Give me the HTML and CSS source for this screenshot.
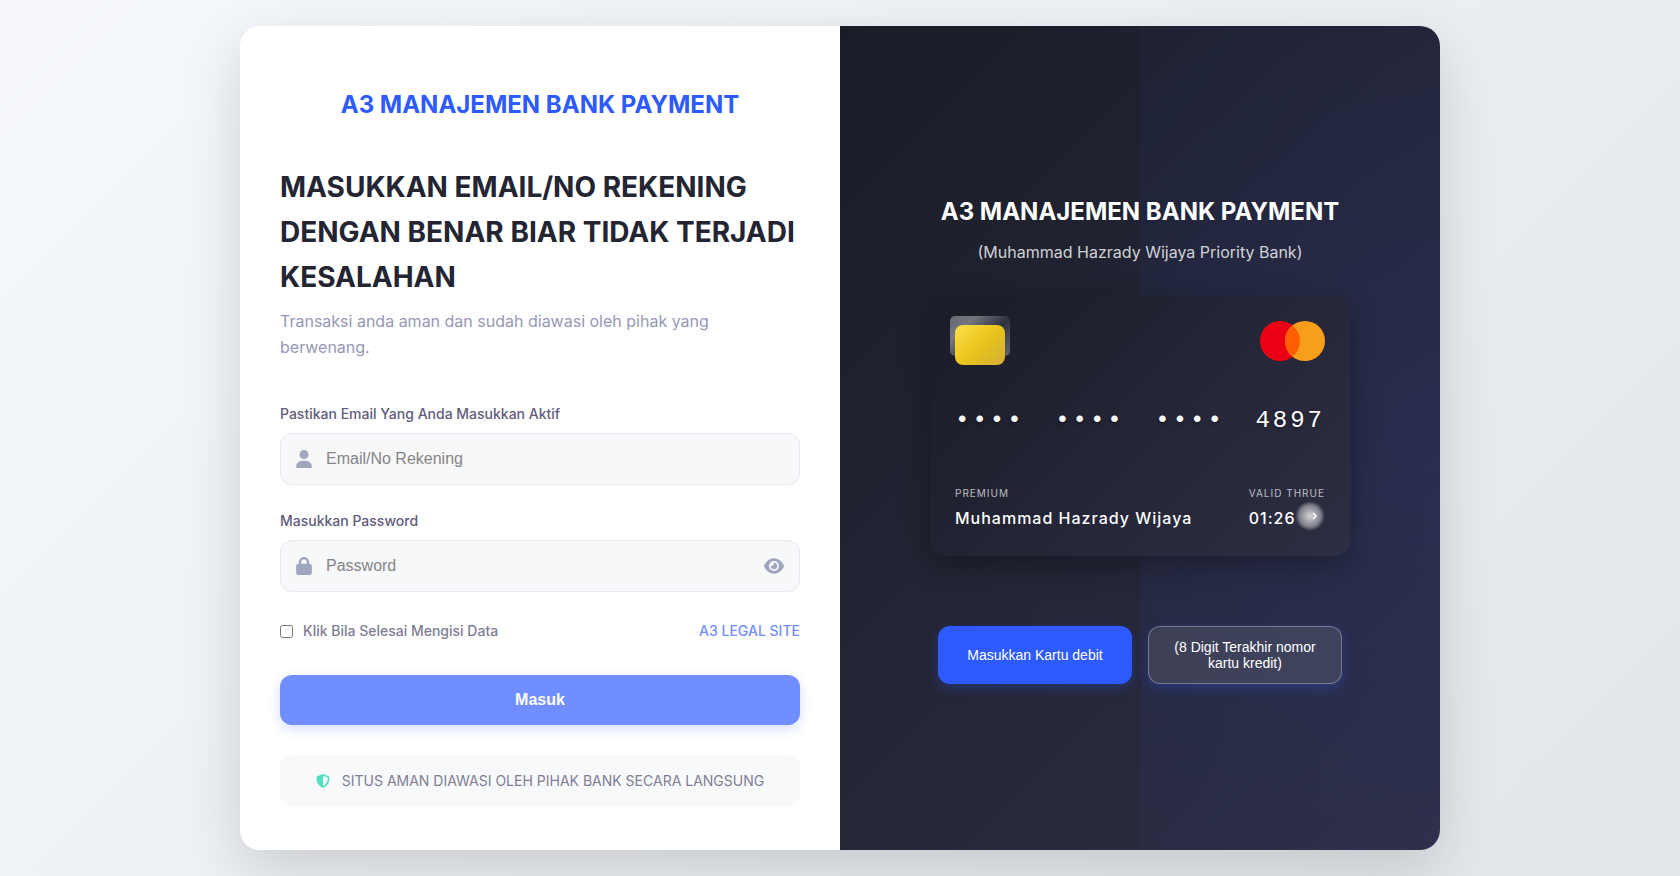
FILE: index.html
```html
<!DOCTYPE html>
<html lang="id">

<head>
  <meta charset="UTF-8">
  <meta name="viewport" content="width=device-width, initial-scale=1.0">
  <title>A3 Manajemen Bank Payment</title>
  <link rel="stylesheet" href="styles.css">
</head>

<body>

  <main class="container">

    <!-- Login form -->
    <section class="login-section">
      <div class="logo">A3 MANAJEMEN BANK PAYMENT</div>

      <h1 class="welcome-title">MASUKKAN EMAIL/NO REKENING DENGAN BENAR BIAR TIDAK TERJADI KESALAHAN</h1>
      <p class="welcome-text">Transaksi anda aman dan sudah diawasi oleh pihak yang berwenang.</p>

      <form>
        <div class="form-group">
          <label for="email">Pastikan Email Yang Anda Masukkan Aktif</label>
          <div class="input-wrapper">
            <svg class="input-icon" viewBox="0 0 448 512" fill="currentColor">
              <path d="M224 256a128 128 0 1 0 0-256 128 128 0 1 0 0 256zm-45.700 48C79.800 304 0 383.800 0 482.300 0 498.700 13.300 512 29.700 512h388.600c16.400 0 29.700-13.300 29.700-29.700C448 383.800 368.200 304 269.700 304h-91.400z" />
            </svg>
            <input type="text" id="email" placeholder="Email/No Rekening">
          </div>
        </div>

        <div class="form-group">
          <label for="password">Masukkan Password</label>
          <div class="input-wrapper">
            <svg class="input-icon" viewBox="0 0 448 512" fill="currentColor">
              <path d="M144 144v48h160v-48c0-44.200-35.800-80-80-80s-80 35.800-80 80zm-64 48v-48C80 64.500 144.500 0 224 0s144 64.500 144 144v48h16c35.300 0 64 28.700 64 64v192c0 35.300-28.700 64-64 64H64c-35.300 0-64-28.700-64-64V256c0-35.300 28.700-64 64-64h16z" />
            </svg>
            <input type="password" id="password" placeholder="Password">
            <button type="button" class="toggle-password" aria-label="Password">
              <svg viewBox="0 0 576 512" fill="currentColor">
                <path d="M288 32c-80.800 0-145.500 36.800-192.600 80.600C48.600 156 17.300 208 2.500 243.700c-3.300 7.900-3.300 16.700 0 24.600C17.300 304 48.600 356 95.400 399.400 142.500 443.200 207.200 480 288 480s145.500-36.800 192.600-80.600c46.800-43.500 78.100-95.400 93-131.100 3.300-7.900 3.300-16.700 0-24.600-14.900-35.700-46.200-87.700-93-131.100C433.500 68.800 368.800 32 288 32zM144 256a144 144 0 1 1 288 0 144 144 0 1 1-288 0zm144-64c0 35.300-28.700 64-64 64-7.100 0-13.900-1.200-20.300-3.300-5.500-1.800-11.900 1.600-11.700 7.400.300 6.900 1.300 13.800 3.200 20.700 13.700 51.200 66.400 81.600 117.600 67.900s81.600-66.400 67.900-117.600c-11.100-41.500-47.800-69.400-88.600-71.100-5.800-.200-9.200 6.100-7.400 11.700 2.100 6.400 3.300 13.200 3.300 20.300z" />
              </svg>
            </button>
          </div>
        </div>

        <div class="form-options">
          <label class="remember-me" for="remember">
            <input type="checkbox" id="remember">
            Klik Bila Selesai Mengisi Data
          </label>
          <a href="#" class="legal-link">A3 LEGAL SITE</a>
        </div>

        <button type="submit" class="login-btn">Masuk</button>
      </form>

      <div class="security-info">
        <svg viewBox="0 0 512 512" fill="currentColor">
          <path d="M256 0c4.600 0 9.200 1 13.400 2.900l188.300 79.900c22 9.300 38.400 31 38.300 57.200-.5 99.200-41.300 280.700-213.600 363.200-16.700 8-36.100 8-52.800 0C57.300 420.700 16.500 239.200 16 140c-.1-26.200 16.300-47.900 38.300-57.200L242.700 2.900C246.800 1 251.400 0 256 0zm0 66.800v378.100C394 378 431.100 230.100 432 141.400L256 66.800z" />
        </svg>
        <span>SITUS AMAN DIAWASI OLEH PIHAK BANK SECARA LANGSUNG</span>
      </div>
    </section>

    <!-- Card preview -->
    <section class="card-section">
      <h2 class="card-title">A3 MANAJEMEN BANK PAYMENT</h2>
      <p class="card-subtitle">(Muhammad Hazrady Wijaya Priority Bank)</p>

      <div class="credit-card">
        <div class="card-header">
          <div class="card-chip"></div>
          <svg class="card-logo" viewBox="0 0 65 40">
            <circle cx="20" cy="20" r="20" fill="#eb0014" />
            <circle cx="45" cy="20" r="20" fill="#f79e1b" />
            <path d="M32.500 4.400a20 20 0 0 1 0 31.200a20 20 0 0 1 0-31.200z" fill="#ff5f00" />
          </svg>
        </div>

        <div class="card-number">
          <span>••••</span>
          <span>••••</span>
          <span>••••</span>
          <span>4897</span>
        </div>

        <div class="card-footer">
          <div>
            <div class="card-label">PREMIUM</div>
            <div class="card-value">Muhammad Hazrady Wijaya</div>
          </div>
          <div class="card-expiry">
            <div class="card-label">VALID THRUE</div>
            <div class="card-value">01:26</div>
            <div class="card-glow">
              <svg viewBox="0 0 6 8" fill="none" stroke="#fff" stroke-width="1.500">
                <path d="M1 1l3 3-3 3" />
              </svg>
            </div>
          </div>
        </div>
      </div>

      <div class="card-actions">
        <button type="button" class="card-btn primary">Masukkan Kartu debit</button>
        <button type="button" class="card-btn secondary">(8 Digit Terakhir nomor kartu kredit)</button>
      </div>
    </section>

  </main>

</body>

</html>
```
FILE: styles.css
```css
:root {
  --primary: #2e5bff;
  --dark: #1a1c27;
  --dark-end: #2e2e44;
  --muted: #9698b5;
  --icon: #a0a5c0;
  --field: #f7f8fa;
  --border: #e6e8ee;
  --control-font: "Liberation Sans", Arial, sans-serif;
}

* {
  margin: 0;
  padding: 0;
  box-sizing: border-box;
}

body {
  min-height: 100vh;
  display: flex;
  align-items: center;
  justify-content: center;
  padding: 20px;
  background: linear-gradient(135deg, #f6f8fd 0%, #e2e6ea 100%);
  color: #232533;
  font-family: Inter, sans-serif;
  font-size: 16px;
  line-height: 26px;
}

.container {
  width: 100%;
  max-width: 1200px;
  display: flex;
  border-radius: 20px;
  overflow: hidden;
  background: #fff;
  box-shadow: 0 20px 60px rgba(0, 0, 0, 0.15);
}

/* Login form */
.login-section {
  flex: 1;
  padding: 60px 40px 43px;
}

.logo {
  margin-bottom: 41px;
  color: var(--primary);
  font-size: 24px;
  font-weight: 700;
  line-height: 38px;
  text-align: center;
}

.welcome-title {
  margin-bottom: 8px;
  font-size: 28px;
  font-weight: 700;
  line-height: 45px;
}

.welcome-text {
  margin-bottom: 43px;
  color: var(--muted);
}

.form-group {
  margin-bottom: 25px;
}

.form-group label {
  display: block;
  margin-bottom: 8px;
  color: #5f5c7c;
  font-size: 14px;
  font-weight: 500;
  line-height: 22px;
}

.input-wrapper {
  display: flex;
  align-items: center;
  gap: 14px;
  height: 52px;
  padding: 0 15px;
  border: 1px solid var(--border);
  border-radius: 12px;
  background: var(--field);
  color: var(--icon);
}

.input-icon {
  width: 16px;
  height: 18px;
}

.input-wrapper input {
  flex: 1;
  min-width: 0;
  height: 100%;
  border: none;
  outline: none;
  background: transparent;
  color: #232533;
  font-family: var(--control-font);
  font-size: 16px;
}

.input-wrapper input::placeholder {
  color: #858585;
}

.toggle-password {
  display: flex;
  border: none;
  background: none;
  color: inherit;
  cursor: pointer;
}

.toggle-password svg {
  width: 20px;
  height: 18px;
}

.form-options {
  display: flex;
  align-items: center;
  justify-content: space-between;
  margin: 28px 0 33px;
  font-size: 14px;
  font-weight: 500;
  line-height: 22px;
}

.remember-me {
  display: flex;
  align-items: center;
  gap: 10px;
  color: #7f7d96;
}

.remember-me input {
  width: 13px;
  height: 13px;
}

.legal-link {
  color: #708eff;
  text-decoration: none;
}

.login-btn {
  display: block;
  width: 100%;
  height: 50px;
  border: none;
  border-radius: 12px;
  background: #708eff;
  box-shadow: 0 4px 12px rgba(46, 91, 255, 0.2);
  color: #fff;
  font-family: var(--control-font);
  font-size: 16px;
  font-weight: 700;
  cursor: pointer;
}

.security-info {
  display: flex;
  align-items: center;
  justify-content: center;
  gap: 12px;
  margin-top: 30px;
  padding: 15px;
  border-radius: 12px;
  background: #f8f9fb;
  color: #7f7d96;
  font-size: 14px;
  line-height: 22px;
}

.security-info svg {
  width: 14px;
  height: 14px;
  color: #4de3c1;
}

/* Card preview */
.card-section {
  position: relative;
  flex: 1;
  display: flex;
  flex-direction: column;
  align-items: center;
  justify-content: center;
  padding: 40px;
  overflow: hidden;
  background: linear-gradient(135deg, var(--dark) 0%, var(--dark-end) 100%);
  color: #fff;
}

.card-section::before {
  content: "";
  position: absolute;
  top: -50%;
  right: -50%;
  width: 100%;
  height: 200%;
  background: radial-gradient(circle, rgba(46, 91, 255, 0.1) 0%, transparent 80%);
}

.card-title,
.card-subtitle,
.credit-card,
.card-actions {
  z-index: 1;
}

.card-title {
  margin-bottom: 8px;
  font-size: 24px;
  font-weight: 700;
  line-height: 38px;
}

.card-subtitle {
  margin-bottom: 31px;
  color: rgba(255, 255, 255, 0.8);
}

.credit-card {
  width: 100%;
  max-width: 420px;
  margin-bottom: 70px;
  padding: 25px;
  border-radius: 16px;
  background: linear-gradient(135deg, var(--dark) 0%, var(--dark-end) 100%);
  box-shadow: 0 10px 30px rgba(0, 0, 0, 0.3);
}

.card-header {
  display: flex;
  align-items: flex-start;
  justify-content: space-between;
  height: 44px;
  margin-bottom: 37px;
}

.card-chip {
  position: relative;
  align-self: flex-end;
  width: 50px;
  height: 40px;
  border-radius: 8px;
  background: linear-gradient(135deg, #ffe04a 0%, #e8c41c 50%, #d4af37 100%);
}

/* metallic plate behind the chip */
.card-chip::before {
  content: "";
  position: absolute;
  z-index: -1;
  top: -9px;
  left: -5px;
  width: 60px;
  height: 40px;
  border-radius: 5px;
  background: linear-gradient(135deg, #656871 0%, #757780 25%, #2f323e 60%, #62656f 100%);
}

.card-logo {
  width: 65px;
  height: 40px;
}

.card-number {
  display: flex;
  justify-content: space-between;
  margin-bottom: 45px;
  font-family: "Liberation Mono", monospace;
  font-size: 24px;
  letter-spacing: 3px;
  line-height: 38px;
  text-shadow: 0 2px 4px rgba(0, 0, 0, 0.3);
}

.card-footer {
  display: flex;
  justify-content: space-between;
}

.card-label {
  margin-bottom: 4px;
  color: rgba(255, 255, 255, 0.7);
  font-size: 10px;
  letter-spacing: 1px;
  line-height: 16px;
}

.card-value {
  font-weight: 500;
  letter-spacing: 1px;
}

.card-expiry {
  position: relative;
}

.card-glow {
  position: absolute;
  right: 0;
  bottom: 0;
  display: flex;
  align-items: center;
  justify-content: flex-end;
  width: 30px;
  height: 30px;
  padding-right: 7px;
  border-radius: 50%;
  background: radial-gradient(circle, rgba(255, 255, 255, 0.8) 0%, rgba(255, 255, 255, 0.4) 50%, transparent 70%);
}

.card-glow svg {
  width: 6px;
  height: 8px;
}

.card-actions {
  display: flex;
  gap: 16px;
  width: 100%;
  max-width: 404px;
}

.card-btn {
  width: 50%;
  height: 58px;
  padding: 0 20px;
  border: none;
  border-radius: 12px;
  box-shadow: 0 4px 12px rgba(46, 91, 255, 0.3);
  color: #fff;
  font-family: var(--control-font);
  font-size: 14px;
  line-height: 16px;
  cursor: pointer;
}

.card-btn.primary {
  background: var(--primary);
}

.card-btn.secondary {
  border: 1px solid rgba(255, 255, 255, 0.3);
  background: rgba(255, 255, 255, 0.1);
}

@media (max-width: 900px) {
  .container {
    flex-direction: column;
  }
}
```
